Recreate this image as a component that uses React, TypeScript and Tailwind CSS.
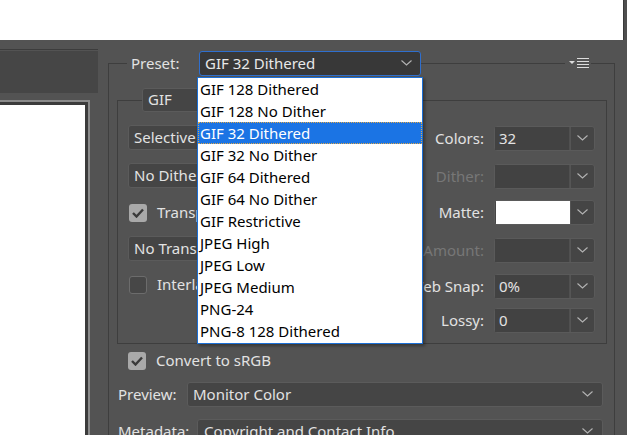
import React from "react";

const Chevron = () => (
  <svg width="11" height="6" viewBox="0 0 11 6">
    <polyline points="0.5,0.5 5.5,5 10.5,0.5" fill="none" stroke="#b4b4b4" strokeWidth="1.1" />
  </svg>
);

const Check = () => (
  <svg width="12" height="10" viewBox="0 0 12 10">
    <polyline points="1,5 4.5,8.5 11,1.5" fill="none" stroke="#3a3a3a" strokeWidth="2.4" />
  </svg>
);

interface checkboxProps {
  checked: boolean;
  label: string;
}

const Checkbox = ({ checked, label }: checkboxProps) => (
  <div className="flex items-center h-[18px]">
    <span
      className={
        checked
          ? "w-[18px] h-[18px] rounded-[3px] bg-[#a9a9a9] flex items-center justify-center"
          : "w-[18px] h-[18px] rounded-[3px] bg-[#474747] border border-[#6c6c6c]"
      }
    >
      {checked && <Check />}
    </span>
    <span className="ml-[10px] whitespace-nowrap">{label}</span>
  </div>
);

const LeftSelect = ({ value, className }: { value: string; className: string }) => (
  <div
    className={`h-[25px] w-[170px] bg-[#454545] border border-[#5b5b5b] rounded-[3px] flex items-center pl-[5px] whitespace-nowrap ${className}`}
  >
    {value}
  </div>
);

interface fieldProps {
  label: string;
  value?: string;
  disabled?: boolean;
  matte?: boolean;
  className: string;
}

const Field = ({ label, value, disabled, matte, className }: fieldProps) => (
  <div className={`flex items-center justify-end gap-[10px] h-[25px] ${className}`}>
    <span className={disabled ? "whitespace-nowrap text-[#777777]" : "whitespace-nowrap"}>{label}</span>
    <div className="w-[101px] h-[25px] flex border border-[#5a5a5a] rounded-[3px] bg-[#454545]">
      <div className="flex-1 flex items-center">
        {matte ? (
          <div className="ml-px w-[74px] h-[23px] bg-white" />
        ) : (
          <div className="w-full h-[23px] flex items-center pl-[4px] bg-[#424242] border-r border-[#505050]">
            {value}
          </div>
        )}
      </div>
      <div className="w-[24px] flex items-center justify-center border-l border-[#555555]">
        <Chevron />
      </div>
    </div>
  </div>
);

const presets = [
  "GIF 128 Dithered",
  "GIF 128 No Dither",
  "GIF 32 Dithered",
  "GIF 32 No Dither",
  "GIF 64 Dithered",
  "GIF 64 No Dither",
  "GIF Restrictive",
  "JPEG High",
  "JPEG Low",
  "JPEG Medium",
  "PNG-24",
  "PNG-8 128 Dithered",
];

const App = () => {
  return (
    <div className="relative w-[627px] h-[435px] overflow-hidden bg-[#535353] text-[#e2e2e2] text-[15px] font-['Noto_Sans',sans-serif]">
      {/* top canvas strip */}
      <div className="h-[40px] flex">
        <div className="w-[623px] bg-white" />
        <div className="flex-1 bg-[#4e4e4e] border-l border-[#3a3a3a]" />
      </div>

      <div className="h-[395px] flex">
        {/* preview column */}
        <div className="w-[98px] shrink-0 flex flex-col">
          <div className="mt-[9px] h-px bg-[#3c3c3c]" />
          <div className="mt-px h-[42px] bg-[#464646]" />
          <div className="mt-[7px] w-[90px] flex-1 border-t-2 border-r-2 border-[#8b8b8b]">
            <div className="h-full border-t-[3px] border-r-[3px] border-[#3b3b3b] bg-white" />
          </div>
        </div>

        {/* settings group */}
        <div className="ml-[10px] w-[507px] mt-[23px] border-l border-t border-r border-[#3e3e3e] flex flex-col">
          <div className="-mt-[13px] h-[26px] flex items-center">
            <div className="ml-[18px] w-[72px] h-full bg-[#535353] flex items-center pl-[4px]">Preset:</div>
            <div className="w-[222px] h-full bg-[#383838] border border-[#2f6fce] rounded-[3px] flex items-center justify-between pl-[5px] pr-[8px] text-[#e8e8e8]">
              <span>GIF 32 Dithered</span>
              <Chevron />
            </div>
            <div className="flex-1" />
            <div className="w-[26px] h-full bg-[#535353] flex items-center justify-center mr-[23px]">
              <svg width="23" height="10" viewBox="0 0 23 10">
                <polygon points="2,3 8,3 5,6" fill="#dcdcdc" />
                <rect x="10" y="0" width="12" height="1" fill="#dcdcdc" />
                <rect x="10" y="3" width="12" height="1" fill="#dcdcdc" />
                <rect x="10" y="6" width="12" height="1" fill="#dcdcdc" />
                <rect x="10" y="9" width="12" height="1" fill="#dcdcdc" />
              </svg>
            </div>
          </div>

          {/* format box */}
          <div className="ml-[8px] mr-[7px] mt-[24px] border border-[#3e3e3e]">
            <div className="-mt-[13px] ml-[24px] h-[24px] w-[90px] bg-[#454545] border border-[#5b5b5b] rounded-[3px] flex items-center pl-[5px]">
              GIF
            </div>
            <div className="flex justify-between">
              <div className="pl-[10px] flex flex-col">
                <LeftSelect value="Selective" className="mt-[13px]" />
                <LeftSelect value="No Dither" className="mt-[13px]" />
                <div className="mt-[16px] pl-px">
                  <Checkbox checked={true} label="Transparency" />
                </div>
                <LeftSelect value="No Transparency Dither" className="mt-[14px]" />
                <div className="mt-[15px] pl-px">
                  <Checkbox checked={false} label="Interlaced" />
                </div>
              </div>
              <div className="pr-[11px] pb-[10px] flex flex-col">
                <Field label="Colors:" value="32" className="mt-[14px]" />
                <Field label="Dither:" disabled className="mt-[13px]" />
                <Field label="Matte:" matte className="mt-[11px]" />
                <Field label="Amount:" disabled className="mt-[13px]" />
                <Field label="Web Snap:" value="0%" className="mt-[11px]" />
                <Field label="Lossy:" value="0" className="mt-[9px]" />
              </div>
            </div>
          </div>

          <div className="mt-[8px] ml-[19px]">
            <Checkbox checked={true} label="Convert to sRGB" />
          </div>

          <div className="mt-[12px] pl-[9px] flex items-center h-[25px]">
            <span className="w-[69px]">Preview:</span>
            <div className="w-[416px] h-[25px] bg-[#454545] border border-[#5b5b5b] rounded-[3px] flex items-center justify-between pl-[5px] pr-[9px]">
              <span>Monitor Color</span>
              <Chevron />
            </div>
          </div>

          <div className="mt-[12px] pl-[9px] flex items-center h-[25px]">
            <span className="w-[79px]">Metadata:</span>
            <div className="w-[406px] h-[25px] bg-[#454545] border border-[#5b5b5b] rounded-[3px] flex items-center justify-between pl-[6px] pr-[9px]">
              <span>Copyright and Contact Info</span>
              <Chevron />
            </div>
          </div>
        </div>
      </div>

      {/* open preset dropdown */}
      <div className="absolute left-[197px] top-[77px] w-[226px] h-[267px] border border-[#1b6fd6] bg-white shadow-[2px_2px_3px_rgba(0,0,0,0.35)]">
        {presets.map((p) => (
          <div
            key={p}
            className={
              p === "GIF 32 Dithered"
                ? "h-[22px] leading-[22px] pl-[2px] bg-[#1b74e4] text-white outline outline-1 outline-dotted outline-[#e0a94a] -outline-offset-1"
                : "h-[22px] leading-[22px] pl-[2px] text-black"
            }
          >
            {p}
          </div>
        ))}
      </div>
    </div>
  );
};

export default App;
